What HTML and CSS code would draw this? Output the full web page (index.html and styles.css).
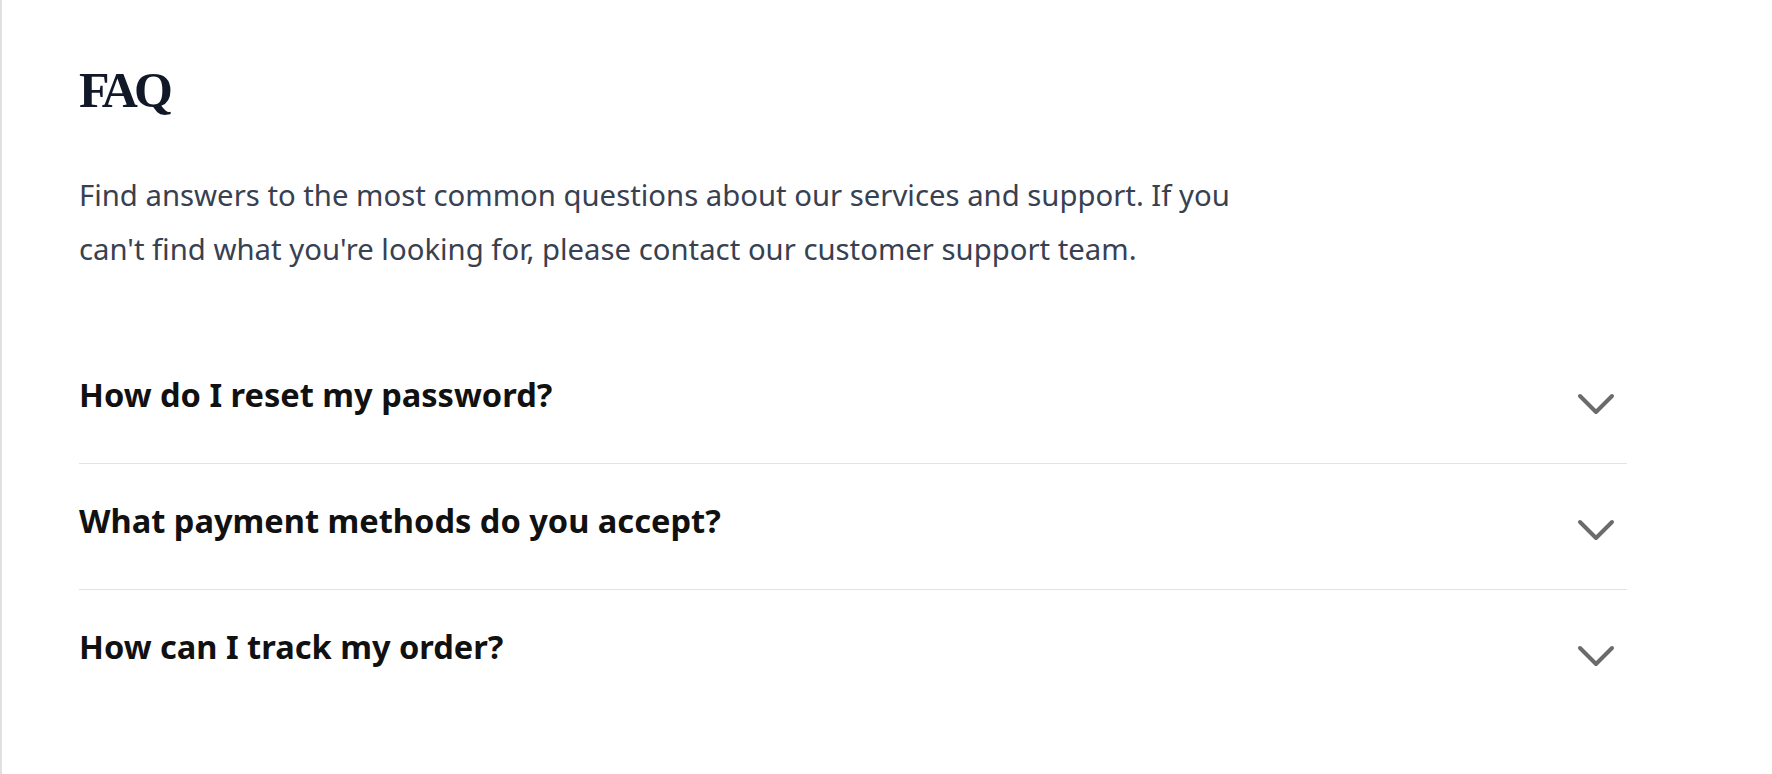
FILE: index.html
```html
<!DOCTYPE html>
<html lang="en">
<head>
<meta charset="utf-8">
<title>FAQ</title>
<link rel="stylesheet" href="styles.css">
</head>
<body>
<main class="page">
  <h1 class="faq-title">FAQ</h1>
  <p class="faq-intro">Find answers to the most common questions about our services and support. If you can't find what you're looking for, please contact our customer support team.</p>
  <div class="faq-list">
    <div class="faq-item">
      <h3 class="faq-q">How do I reset my password?</h3>
      <svg class="chev" viewBox="0 0 40 24" width="40" height="24"><path d="M4 4 L20 20 L36 4"/></svg>
    </div>
    <div class="faq-item">
      <h3 class="faq-q">What payment methods do you accept?</h3>
      <svg class="chev" viewBox="0 0 40 24" width="40" height="24"><path d="M4 4 L20 20 L36 4"/></svg>
    </div>
    <div class="faq-item">
      <h3 class="faq-q">How can I track my order?</h3>
      <svg class="chev" viewBox="0 0 40 24" width="40" height="24"><path d="M4 4 L20 20 L36 4"/></svg>
    </div>
  </div>
</main>
</body>
</html>
```

FILE: styles.css
```css
html, body {
  margin: 0;
  padding: 0;
  background: #ffffff;
}

.page {
  box-sizing: border-box;
  min-height: 100vh;
  border-left: 2px solid #e0e0e0;
  padding: 65px 0 40px 77px;
  font-family: "Noto Sans", Lato, sans-serif;
}

.faq-title {
  margin: 0;
  font-family: "Liberation Serif", serif;
  font-weight: 700;
  font-size: 50px;
  line-height: 50px;
  letter-spacing: -4px;
  color: #111827;
}

.faq-intro {
  margin: 53px 0 0;
  max-width: 1190px;
  font-size: 29.3px;
  line-height: 54px;
  color: #374151;
}

.faq-list {
  margin-top: 62px;
  width: 1548px;
}

.faq-item {
  display: flex;
  align-items: flex-start;
  justify-content: space-between;
  padding: 33px 0 44px;
  border-bottom: 1px solid #e3e3e3;
}

.faq-item:last-child {
  border-bottom: none;
}

.faq-q {
  margin: 0;
  font-size: 32.6px;
  line-height: 48px;
  font-weight: 700;
  color: #111111;
}

.chev {
  flex: none;
  margin: 21px 11px 0 0;
  fill: none;
  stroke: #6b6b6b;
  stroke-width: 4;
  stroke-linecap: round;
  stroke-linejoin: round;
}
```
